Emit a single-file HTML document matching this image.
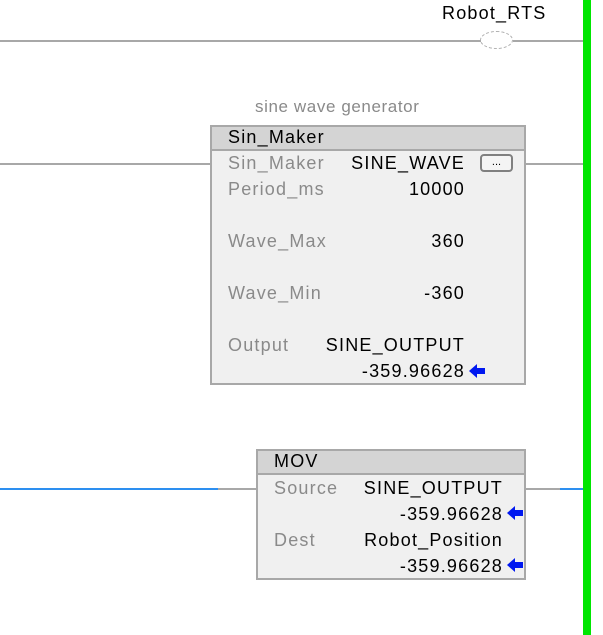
<!DOCTYPE html>
<html><head><style>
body{margin:0;width:603px;height:635px;background:#fff;position:relative;overflow:hidden;font-family:"Liberation Sans",Arial,sans-serif;font-size:18px;letter-spacing:1.2px;color:#000}
.a{position:absolute;white-space:nowrap;line-height:20px}
.l{position:absolute;height:2px;background:#a8a8a8}
.g{color:#8a8a8a}
.r{text-align:right}
.box{position:absolute;background:#f0f0f0;border:2px solid #a8a8a8;box-sizing:border-box}
.hd{position:absolute;left:0;right:0;top:0;height:22px;background:#d4d4d4;border-bottom:2px solid #a8a8a8}
.arr{position:absolute;width:0;height:0;border-top:7px solid transparent;border-bottom:7px solid transparent;border-right:8px solid #0018f0}
.arr:after{content:"";position:absolute;left:7px;top:-3px;width:9px;height:6px;background:#0018f0}
</style></head><body>
<div class="a" style="left:442px;top:3px">Robot_RTS</div>
<div class="l" style="left:0;top:40px;width:481px"></div>
<div class="l" style="left:513px;top:40px;width:70px"></div>
<div class="a" style="left:480px;top:31px;width:33px;height:18px;border:1px dashed #b0b0b0;border-radius:50%;box-sizing:border-box"></div>
<div class="a" style="left:583px;top:0;width:8px;height:635px;background:#00e600"></div>

<div class="a g" style="left:255px;top:97px;font-size:17px;letter-spacing:0.6px">sine wave generator</div>
<div class="l" style="left:0;top:163px;width:210px"></div>
<div class="l" style="left:526px;top:163px;width:57px"></div>
<div class="box" style="left:210px;top:125px;width:316px;height:260px">
<div class="hd"></div>
</div>
<div class="a" style="left:228px;top:127px">Sin_Maker</div>
<div class="a g" style="left:228px;top:153px">Sin_Maker</div>
<div class="a r" style="left:300px;width:165px;top:153px">SINE_WAVE</div>
<div class="a" style="left:480px;top:154px;width:33px;height:18px;border:2px solid #808080;border-radius:4px;box-sizing:border-box;background:#f4f4f4;font-size:11px;letter-spacing:0;text-align:center;line-height:12px">...</div>
<div class="a g" style="left:228px;top:179px">Period_ms</div>
<div class="a r" style="left:300px;width:165px;top:179px">10000</div>
<div class="a g" style="left:228px;top:231px">Wave_Max</div>
<div class="a r" style="left:300px;width:165px;top:231px">360</div>
<div class="a g" style="left:228px;top:283px">Wave_Min</div>
<div class="a r" style="left:300px;width:165px;top:283px">-360</div>
<div class="a g" style="left:228px;top:335px">Output</div>
<div class="a r" style="left:300px;width:165px;top:335px">SINE_OUTPUT</div>
<div class="a r" style="left:300px;width:165px;top:361px">-359.96628</div>
<div class="arr" style="left:469px;top:364px"></div>

<div class="a" style="left:0;top:488px;width:218px;height:2px;background:#2d8ff0"></div>
<div class="l" style="left:218px;top:488px;width:38px"></div>
<div class="l" style="left:526px;top:488px;width:34px"></div>
<div class="a" style="left:560px;top:488px;width:23px;height:2px;background:#2d8ff0"></div>
<div class="box" style="left:256px;top:449px;width:270px;height:131px">
<div class="hd"></div>
</div>
<div class="a" style="left:274px;top:451px">MOV</div>
<div class="a g" style="left:274px;top:478px">Source</div>
<div class="a r" style="left:300px;width:203px;top:478px">SINE_OUTPUT</div>
<div class="a r" style="left:300px;width:203px;top:504px">-359.96628</div>
<div class="arr" style="left:507px;top:506px"></div>
<div class="a g" style="left:274px;top:530px">Dest</div>
<div class="a r" style="left:300px;width:203px;top:530px">Robot_Position</div>
<div class="a r" style="left:300px;width:203px;top:556px">-359.96628</div>
<div class="arr" style="left:507px;top:558px"></div>
</body></html>
